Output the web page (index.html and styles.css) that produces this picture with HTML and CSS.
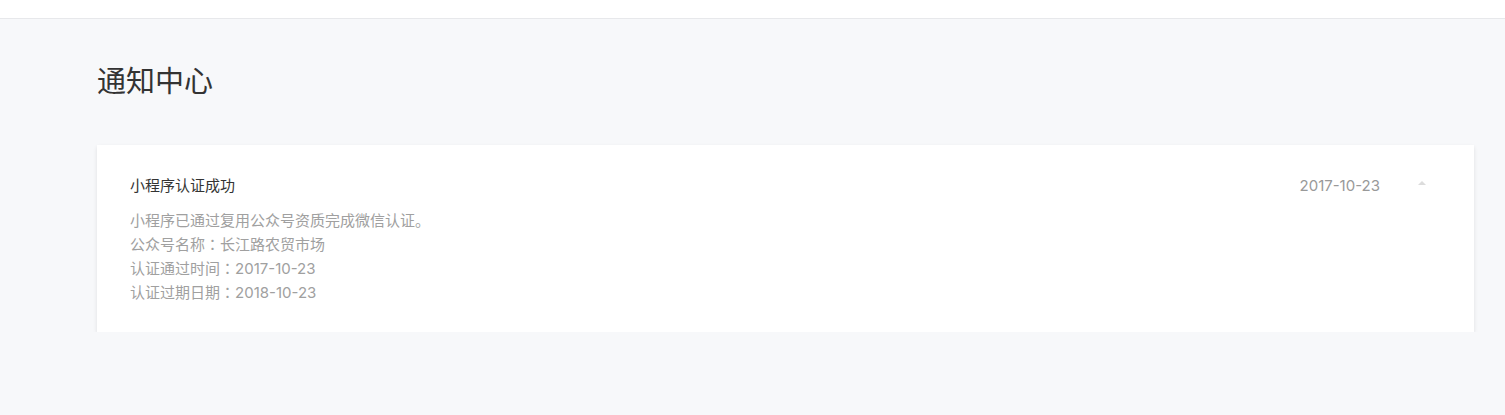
FILE: index.html
```html
<!DOCTYPE html>
<html lang="zh-CN">
<head>
  <meta charset="UTF-8" />
  <meta name="viewport" content="width=device-width, initial-scale=1.0" />
  <title>通知中心</title>
  <link rel="stylesheet" href="styles.css">
</head>
<body>
  <div class="topbar"></div>

  <div class="main">
    <h1>通知中心</h1>

    <div class="notice">
      <div class="notice-head">
        <h2>小程序认证成功</h2>
        <span class="date">2017-10-23</span>
        <span class="arrow"></span>
      </div>
      <div class="notice-body">
        <p>小程序已通过复用公众号资质完成微信认证。</p>
        <p>公众号名称<span class="sep" lang="zh-TW">：</span>长江路农贸市场</p>
        <p>认证通过时间<span class="sep" lang="zh-TW">：</span>2017-10-23</p>
        <p>认证过期日期<span class="sep" lang="zh-TW">：</span>2018-10-23</p>
      </div>
    </div>
  </div>
</body>
</html>
```

FILE: styles.css
```css
body {
  margin: 0;
  font-family: Inter, "Noto Sans CJK SC", sans-serif;
  background-color: #f7f8fa;
  color: #333;
}
.topbar {
  height: 18px;
  background-color: #fff;
  border-bottom: 1px solid #e7e8eb;
}
.main {
  padding: 0 31px 0 97px;
}
h1 {
  margin: 0;
  padding-top: 43px;
  font-size: 29px;
  font-weight: normal;
  line-height: 40px;
  color: #333;
}
.notice {
  margin-top: 43px;
  background-color: #fff;
  padding: 29px 48px 27px 33px;
  box-shadow: 0 2px 4px rgba(0, 0, 0, 0.1);
}
.notice-head {
  display: flex;
  align-items: center;
  line-height: 24px;
}
.notice-head h2 {
  margin: 0;
  flex: 1;
  font-size: 15px;
  font-weight: normal;
  color: #333;
}
.date {
  font-size: 15px;
  color: #999;
}
.arrow {
  width: 0;
  height: 0;
  margin-left: 38px;
  margin-bottom: 6px;
  border-left: 4px solid transparent;
  border-right: 4px solid transparent;
  border-bottom: 4px solid #dcdcdc;
}
.notice-body {
  margin-top: 11px;
}
.notice-body p {
  margin: 0;
  font-size: 15px;
  line-height: 24px;
  color: #a0a0a0;
}
.sep {
  font-family: "Noto Sans CJK TC", sans-serif;
  line-height: 1;
}
```
